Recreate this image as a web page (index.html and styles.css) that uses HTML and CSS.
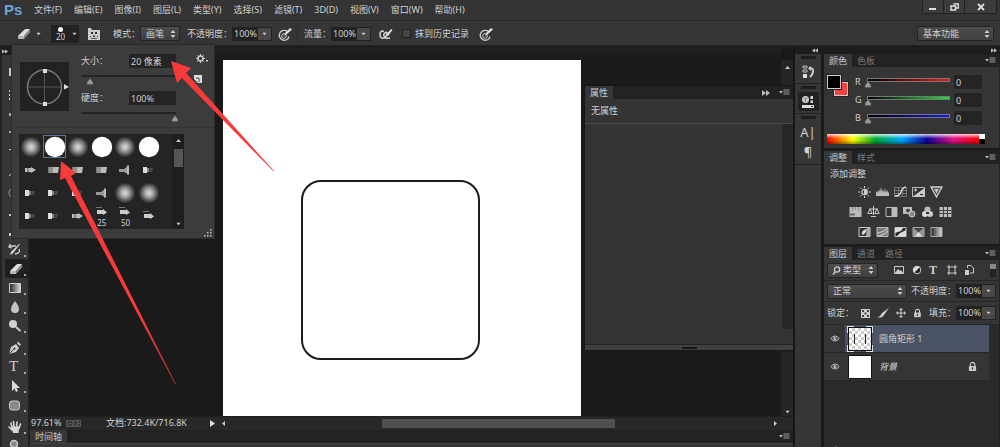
FILE: index.html
```html
<!DOCTYPE html>
<html lang="zh-CN">
<head>
<meta charset="utf-8">
<title>Ps</title>
<link rel="stylesheet" href="styles.css">
</head>
<body>
<svg class="defs" aria-hidden="true">
  <defs>
    <linearGradient id="fade"><stop offset="0" stop-color="#222"/><stop offset="1" stop-color="#ddd"/></linearGradient>
    <linearGradient id="arrowTail" gradientUnits="userSpaceOnUse" x1="90" y1="200" x2="176" y2="385"><stop offset="0.6" stop-color="#f83a3a"/><stop offset="1" stop-color="#a03030"/></linearGradient>
    <radialGradient id="softTip"><stop offset="0" stop-color="#ddd"/><stop offset=".35" stop-color="#aaa"/><stop offset="1" stop-color="#222"/></radialGradient>
    <symbol id="eraser" viewBox="0 0 16 16"><path d="M2 10 8 4q1-1 2-1h4l-6 7z" fill="#e0e0e0"/><path d="m14 3 .4 3-6 6.500-.4-2.500z" fill="#8a8a8a"/><path d="M2 10h6l.4 2.500q-.4.500-1 .5H3q-1 0-1-1z" fill="#b5b5b5"/></symbol>
    <symbol id="pressure" viewBox="0 0 16 16"><g fill="none" stroke="#ccc"><path d="M10.500 5.500a5 5 0 1 0 1.600 5" stroke-width="1.300"/><circle cx="7" cy="10" r="2.300"/></g><path d="m7 10 1.500-3.500L13 2l2 1.500L10 8z" fill="#ddd"/></symbol>
    <symbol id="updown" viewBox="0 0 6 8"><path d="m3 0 2.500 3h-5zM3 8l2.500-3h-5z" fill="#ccc"/></symbol>
    <symbol id="down" viewBox="0 0 6 4"><path d="M.5.5h5L3 3.500z" fill="#ccc"/></symbol>
    <symbol id="thumb" viewBox="0 0 8 7"><path d="m4 .5 3 4v2H1v-2z" fill="#999" stroke="#555" stroke-width=".5"/></symbol>
    <symbol id="panelMenu" viewBox="0 0 11 7"><path d="M0 2h4L2 4.500z" fill="#bbb"/><path d="M4.500 1h6M4.500 3h6M4.500 5h6" stroke="#999"/></symbol>
    <symbol id="ffwd" viewBox="0 0 8 6"><path d="m0 0 4 3-4 3zm4 0 4 3-4 3z" fill="#bbb"/></symbol>
    <symbol id="hardBrush" viewBox="0 0 22 22"><circle cx="11" cy="11" r="10.200" fill="#fff"/></symbol>
    <symbol id="softBrush" viewBox="0 0 22 22"><circle cx="11" cy="11" r="10.500" fill="url(#softTip)"/></symbol>
    <symbol id="tipA" viewBox="0 0 22 22"><path d="M5 9h6V8l5 3-5 3v-1H5z" fill="#bbb"/><path d="M8 9v4" stroke="#555"/></symbol>
    <symbol id="tipSmall" viewBox="0 0 22 14"><path d="M6 5h6V4l4 3.500-4 2.500V9H6z" fill="#ccc"/><path d="M5 2.500h6" stroke="#777"/></symbol>
    <symbol id="tipB" viewBox="0 0 22 22"><path d="M5 8h5v6H5z" fill="#777"/><path d="M7 8v6M9 8v6" stroke="#aaa"/><path d="M10 8h6l-1 6h-5z" fill="#bbb"/></symbol>
    <symbol id="tipC" viewBox="0 0 22 22"><path d="M5 8h4v6H5z" fill="#ddd"/><path d="M9 9h2v4H9z" fill="#888"/><path d="M11.500 9H15l-1 4h-2.500z" fill="#484848"/></symbol>
    <symbol id="tipFan" viewBox="0 0 22 22"><path d="M5 10h5l4-3v8l-4-2H5z" fill="#999"/><path d="M13 6.500h2v9h-2z" fill="#bbb"/></symbol>
    <symbol id="eye" viewBox="0 0 12 10"><path d="M1 5q5-6 10 0-5 6-10 0z" fill="none" stroke="#bbb" stroke-width="1.200"/><circle cx="6" cy="5" r="2" fill="#bbb"/><circle cx="6.800" cy="4.200" r=".7" fill="#222"/></symbol>
    <symbol id="lock" viewBox="0 0 10 12"><path d="M2.500 6V4a2.500 2.500 0 0 1 5 0v2" fill="none" stroke="#ccc" stroke-width="1.300"/><path d="M1 5.500h8v5.500H1z" fill="#ccc"/><path d="M4.300 7h1.400v2.500H4.300z" fill="#333"/></symbol>
  </defs>
</svg>
<div class="app">
  <header class="menubar">
    <span class="logo">Ps</span>
    <nav class="menu">
      <button>文件(F)</button><button>编辑(E)</button><button>图像(I)</button><button>图层(L)</button><button>类型(Y)</button><button>选择(S)</button><button>滤镜(T)</button><button>3D(D)</button><button>视图(V)</button><button>窗口(W)</button><button>帮助(H)</button>
    </nav>
    <div class="winbtns">
      <button aria-label="最小化"><svg width="8" height="8"><path d="M0 5h7v2H0z" fill="#ddd"/></svg></button>
      <button aria-label="还原"><svg width="9" height="8"><path d="M3.500 1h5v4h-3M1 3h4.500v4H1z" fill="none" stroke="#ddd" stroke-width="1.500"/></svg></button>
      <button class="close" aria-label="关闭"><svg width="8" height="8"><path d="m1 1 6 6M7 1 1 7" stroke="#ddd" stroke-width="1.800"/></svg></button>
    </div>
  </header>

  <div class="options">
    <button class="toolpick" aria-label="橡皮擦"><svg width="16" height="16"><use href="#eraser"/></svg><svg width="5" height="4"><use href="#down"/></svg></button>
    <button class="brushpick"><span class="dot"></span><span>20</span><svg class="brusharrow" width="5" height="4"><use href="#down"/></svg></button>
    <button class="plain brushpanel" aria-label="画笔面板"><svg width="14" height="14"><path d="M1 1h3l1 2h8v10H1z" fill="#ccc"/><path d="M4 5h2v2H4zM8 5h2v2H8zM6 8.500h2V10H6zM3 9h1v1H3zm7 0h1v1h-1zM4 11.200h6v.8H4z" fill="#333"/></svg></button>
    <label class="field">模式：<span class="select mode"><select><option>画笔</option></select><svg width="6" height="8"><use href="#updown"/></svg></span></label>
    <label class="field">不透明度：<span class="combo"><input value="100%"><button aria-label="不透明度"><svg width="5" height="4"><use href="#down"/></svg></button></span></label>
    <button class="plain" aria-label="压力"><svg width="16" height="16"><use href="#pressure"/></svg></button>
    <span class="rule"></span>
    <label class="field">流量：<span class="combo"><input value="100%"><button aria-label="流量"><svg width="5" height="4"><use href="#down"/></svg></button></span></label>
    <button class="plain airbrush" aria-label="喷枪"><svg width="15" height="14"><path d="M6 4.500Q2 3 2 7.500T6 11q3-1 3-6M9 5q-4 1-3 4t6 2" fill="none" stroke="#ccc" stroke-width="1.600"/><path d="m8 8 5-6 1.500 1L10 9z" fill="#ddd"/></svg></button>
    <label class="check"><input type="checkbox">抹到历史记录</label>
    <button class="plain" aria-label="大小压力"><svg width="16" height="16"><use href="#pressure"/></svg></button>
    <span class="select workspace"><select aria-label="工作区"><option>基本功能</option></select><svg width="6" height="8"><use href="#updown"/></svg></span>
  </div>

  <main class="work">
    <aside class="tools">
      <div class="toolhead"><svg width="6" height="5" viewBox="0 0 8 6"><use href="#ffwd"/></svg></div>
      <div class="toolgroup">
        <button aria-label="移动"><svg width="14" height="14"><path d="M1 2h2v8H1z" fill="#ccc"/></svg></button>
      </div>
      <div class="toolgroup">
        <button aria-label="选框"><svg width="14" height="14"><path d="M1.500 2v12" stroke="#ccc" stroke-dasharray="2"/></svg></button>
        <button aria-label="套索"><svg width="14" height="14"><path d="M1 6h2v3H1z" fill="#aaa"/></svg></button>
        <button aria-label="魔棒"><svg width="14" height="14"><path d="M1 5h2v2H1z" fill="#aaa"/></svg></button>
        <button aria-label="裁剪"><svg width="14" height="14"><path d="M1 4h3v1H1z" fill="#ccc"/></svg></button>
        <button aria-label="吸管"><svg width="14" height="14"><path d="m1 12 3-3" stroke="#ccc"/></svg></button>
      </div>
      <div class="toolgroup">
        <button aria-label="修复"><svg width="14" height="14"><circle cx="6" cy="7" r="5" fill="none" stroke="#999"/></svg></button>
        <button aria-label="画笔"><svg width="14" height="14"><path d="M1 9h3v2H1z" fill="#ccc"/></svg></button>
        <button aria-label="图章"><svg width="14" height="14"><path d="M1 9h3v3H1z" fill="#ccc"/></svg></button>
        <button aria-label="历史画笔"><svg width="14" height="14"><path d="M1 3h7M2 1l-1 3 3 1m7 1q2 4-4 5" fill="none" stroke="#ccc" stroke-width="1.300"/><path d="m12 1-6 8q-2 3-5 3 2-1 2-3l2-2 6-6z" fill="#ddd"/></svg></button>
        <button class="active" aria-label="橡皮擦"><svg width="16" height="16"><use href="#eraser"/></svg></button>
        <button aria-label="渐变"><svg width="14" height="14"><path d="M1.500 2.500h11v9h-11z" fill="url(#fade)" stroke="#ccc"/></svg></button>
        <button aria-label="模糊"><svg width="14" height="14"><path d="M7 1q4 5 4 8a4 4 0 0 1-8 0q0-3 4-8z" fill="#c4c4c4"/></svg></button>
        <button aria-label="减淡"><svg width="14" height="14"><circle cx="5" cy="5" r="4" fill="#d0d0d0"/><path d="m8 8 4.500 4" stroke="#ccc" stroke-width="2"/></svg></button>
      </div>
      <div class="toolgroup">
        <button aria-label="钢笔"><svg width="14" height="14"><path d="m1 13 2-7 5-3 3 4-3 4z" fill="#d0d0d0"/><path d="m9 2 1-1.500 3 3L11.500 5z" fill="#ccc"/><path d="m1 13 5-5" stroke="#333"/><circle cx="6.500" cy="7.500" r="1" fill="#333"/></svg></button>
        <button class="letter" aria-label="文字">T</button>
        <button aria-label="路径选择"><svg width="14" height="14"><path d="M4 1v11l2.500-2.500L8 13l2-1-1.500-3H12z" fill="#d8d8d8"/></svg></button>
        <button aria-label="圆角矩形"><svg width="14" height="14"><rect x="1.500" y="3" width="10" height="9" rx="2.500" fill="#888" stroke="#ccc"/></svg></button>
      </div>
      <div class="toolgroup">
        <button aria-label="抓手"><svg width="14" height="14"><path d="M4 8 3 3m3 4-.5-5.500M8.500 7 9 2M11 8l1.500-4M4 10 1 7" stroke="#d8d8d8" stroke-width="1.600" stroke-linecap="round"/><path d="M3.500 6.500h8L10.500 13H5z" fill="#d8d8d8"/></svg></button>
        <button aria-label="缩放"><svg width="14" height="14"><circle cx="6" cy="5" r="3.500" fill="#888" stroke="#ccc" stroke-width="1.500"/><path d="m8.500 8 4 4" stroke="#ccc" stroke-width="2"/></svg></button>
      </div>
    </aside>

    <section class="document">
      <div class="docrow">
        <div class="stage"><div class="page"><div class="shape"></div></div></div>
        <div class="vscroll"><svg width="5" height="4"><path d="m2.500 0 2.500 3H0z" fill="#ccc"/></svg><svg width="5" height="4"><use href="#down"/></svg></div>
      </div>
      <div class="status">
        <span class="zoomval">97.61%</span>
        <svg width="15" height="9"><path d="M0 1h15v7H0z" fill="#555"/><circle cx="4" cy="4.500" r="2" fill="none" stroke="#222"/><path d="M8 3h2v3H8m4-3h2m-2 3h2" stroke="#222" fill="none"/></svg>
        <span class="docsize">文档:732.4K/716.8K</span>
        <svg width="5" height="7"><path d="m0 0 5 3.500L0 7z" fill="#ddd"/></svg>
        <div class="hscroll"><svg width="3" height="5"><path d="M3 0v5L0 2.500z" fill="#ccc"/></svg><span class="hthumb"></span><svg width="3" height="5"><path d="M0 0v5l3-2.500z" fill="#ccc"/></svg></div>
      </div>
      <div class="tabs timeline"><button class="tab on">时间轴</button><svg class="pmenu" width="11" height="7"><use href="#panelMenu"/></svg></div>
      <div class="timebody"></div>

      <section class="props">
        <div class="tabs"><button class="tab on">属性</button><svg class="pmenu" width="8" height="6"><use href="#ffwd"/></svg><svg width="11" height="7"><use href="#panelMenu"/></svg></div>
        <h2>无属性</h2>
        <div class="propbody"><span></span></div>
        <div class="grip"></div>
      </section>
    </section>

    <aside class="strip">
      <div class="striphead"><svg class="flip" width="6" height="5" viewBox="0 0 8 6"><use href="#ffwd"/></svg></div>
      <div class="stripgroup"><button aria-label="历史记录"><svg width="14" height="14"><path d="M2 1h4v2H2zm0 4h4v2H2z" fill="none" stroke="#bbb"/><path d="M2 9h4v4H2z" fill="#ddd"/><path d="M8 3q5 0 4 4-.5 3-3 5" fill="none" stroke="#ccc" stroke-width="2"/><path d="M7 3.500 10 1v5z" fill="#ccc"/></svg></button></div>
      <div class="stripgroup"><button class="active" aria-label="属性"><svg width="14" height="14"><circle cx="4.500" cy="4.500" r="3.500" fill="#ccc"/><path d="m2.500 3 2 1 2-1m-2 1v3" stroke="#777" fill="none"/><path d="M9.500 1H12v3H9.500zm0 4.500H12V8H9.500zM1 10h12v3H1z" fill="#ddd"/><path d="M10 11h2v1h-2z" fill="#333"/></svg></button></div>
      <div class="stripgroup tall"><button class="glyph" aria-label="字符">A|</button><button class="glyph" aria-label="段落">¶</button></div>
    </aside>

    <aside class="panels">
      <div class="striphead"><svg width="6" height="5" viewBox="0 0 8 6"><use href="#ffwd"/></svg></div>
      <section class="panel">
        <div class="tabs"><button class="tab on">颜色</button><button class="tab">色板</button><svg class="pmenu" width="11" height="7"><use href="#panelMenu"/></svg></div>
        <div class="color">
          <div class="swatches"><span class="bg"></span><span class="fg"></span></div>
          <div class="channels">
            <label class="channel"><span>R</span><span class="track red"><svg width="8" height="7"><use href="#thumb"/></svg></span><input value="0"></label>
            <label class="channel"><span>G</span><span class="track green"><svg width="8" height="7"><use href="#thumb"/></svg></span><input value="0"></label>
            <label class="channel"><span>B</span><span class="track blue"><svg width="8" height="7"><use href="#thumb"/></svg></span><input value="0"></label>
          </div>
        </div>
        <div class="spectrum"><span class="hues"></span><span class="bw"></span></div>
      </section>
      <section class="panel">
        <div class="tabs"><button class="tab on">调整</button><button class="tab">样式</button><svg class="pmenu" width="11" height="7"><use href="#panelMenu"/></svg></div>
        <div class="adjust">
          <h2>添加调整</h2>
          <div class="adjrow">
            <svg width="13" height="12"><circle cx="6.500" cy="6" r="2.700" fill="none" stroke="#ccc" stroke-width="1.200"/><path d="M6.500 3.300v5.400a2.700 2.700 0 0 0 0-5.400zM6.500 0v2m0 8v2M0 6h2m9 0h2M2 1.500 3.500 3m6 6L11 10.500M2 10.500 3.500 9m6-6L11 1.500" fill="#ccc" stroke="#ccc"/></svg>
            <svg width="13" height="12"><path d="M0 10V6l1-1 1 2 1-4 1 3 1-5 1 5 1-3 1 4 1-5 1 5 1-3 1 2 1 1v3z" fill="#bbb"/></svg>
            <svg width="13" height="12"><path d="M.5 1.500h12v9H.5zM4.500 1v10m4-10v10M0 4.500h13m-13 3h13" fill="none" stroke="#777"/><path d="M1 10q5 0 6-4t5-5" fill="none" stroke="#ddd" stroke-width="1.300"/></svg>
            <svg width="13" height="12"><path d="M.5 1.500h12v9H.5z" fill="#333" stroke="#bbb"/><path d="M1 10.500 12.500 2v8.500z" fill="#ccc"/><path d="M2 4h3M3.500 2.500v3" stroke="#ccc"/><path d="M8 8.500h3" stroke="#222"/></svg>
            <svg width="13" height="12"><path d="M1 1h11l-5.500 10z" fill="#555" stroke="#ccc" stroke-width="1.300"/><path d="M4.500 3h4L6.500 7.500z" fill="#ccc"/></svg>
          </div>
          <div class="adjrow">
            <svg width="13" height="12"><path d="M.5 1h12v10H.5z" fill="#bbb"/><path d="M3.500 1v4m3-4v3m3-3v4" stroke="#888"/><path d="M1 7h11v3H1z" fill="url(#fadeBand)"/><path d="M1 7.500h5v2H1z" fill="#666"/></svg>
            <svg width="13" height="12"><path d="M6.500 0v9M2 3h9M4 10.500h5M3 3 .8 7.500h4.400zm7 0L7.800 7.500h4.400z" fill="none" stroke="#ccc"/></svg>
            <svg width="13" height="12"><path d="M1 1.500h11v9H1z" fill="#333" stroke="#bbb"/><path d="M6.500 1.500H12v9H6.500z" fill="#bbb"/></svg>
            <svg width="13" height="12"><path d="M0 1h9v7H0z" fill="#bbb"/><circle cx="5" cy="4.500" r="2.500" fill="#444" stroke="#ccc"/><circle cx="9" cy="8" r="3" fill="#888" stroke="#ccc"/></svg>
            <svg width="13" height="12"><circle cx="6.500" cy="3.500" r="3" fill="#bbb"/><circle cx="4" cy="8" r="3" fill="#ddd"/><circle cx="9" cy="8" r="3" fill="#ccc"/><path d="M5 6h3v2H5z" fill="#333"/></svg>
            <svg width="13" height="12"><path d="M.5 1h12v10H.5z" fill="#bbb"/><path d="M4.500 1v10m4-10v10M0 4.500h13m-13 3h13" stroke="#444"/></svg>
          </div>
          <div class="adjrow">
            <svg width="13" height="12"><path d="M1 1.500h11v9H1z" fill="#333" stroke="#ccc"/><path d="M4 9q-1-5 5-6-1 5-5 6z" fill="#ddd"/><path d="M9 1.500h3v9H8z" fill="#aaa"/></svg>
            <svg width="13" height="12"><path d="M1 1.500h11v9H1z" fill="#777" stroke="#bbb"/><path d="M1 7q5 0 11-5M1 10q6 0 11-5" fill="none" stroke="#bbb" stroke-width="1.500"/></svg>
            <svg width="13" height="12"><path d="M1 1.500h11v9H1z" fill="#222" stroke="#ccc"/><path d="M1 2h8L7 5 1 7zm11 2v6H3l3-3z" fill="#ddd"/></svg>
            <svg width="13" height="12"><path d="M1 1.500h11v9H1z" fill="#444" stroke="#aaa"/><path d="m1 1.500 5.500 5-5.500 4zm11 0-5.500 5 5.500 4z" fill="#999"/><path d="m2 10.500 4.500-4.500 4.500 4.500z" fill="#ddd"/></svg>
            <svg width="13" height="12"><path d="M1 1.500h11v9H1z" fill="url(#fade)" stroke="#aaa"/></svg>
          </div>
        </div>
      </section>
      <section class="panel layers">
        <div class="tabs"><button class="tab on">图层</button><button class="tab">通道</button><button class="tab">路径</button><svg class="pmenu" width="11" height="7"><use href="#panelMenu"/></svg></div>
        <div class="lrow filter">
          <span class="select kind"><svg class="mag" width="9" height="9"><circle cx="5" cy="3.500" r="2.600" fill="none" stroke="#ccc" stroke-width="1.300"/><path d="m3.500 5.500-2.500 3" stroke="#ccc" stroke-width="1.400"/></svg><select aria-label="筛选"><option>类型</option></select><svg width="6" height="8"><use href="#updown"/></svg></span>
          <span class="filters">
            <svg width="10" height="10"><path d="M.5 1.500h9v7h-9z" fill="none" stroke="#ccc"/><path d="m1 8 3-4 2 2 1-1 2 3z" fill="#ccc"/></svg>
            <svg width="10" height="10"><circle cx="5" cy="5" r="3.800" fill="#222" stroke="#ccc"/><path d="M2.200 7.800 7.800 2.200A4 4 0 0 0 2.200 7.800z" fill="#ddd"/></svg>
            <span class="tglyph">T</span>
            <svg width="10" height="10"><path d="M2 0v10M8 0v10M0 2h10M0 8h10" stroke="#ccc"/></svg>
            <svg width="10" height="10"><path d="M3.500 3V.5H7L9.500 3v5H6" fill="none" stroke="#ccc"/><path d="M1 5h4v5H1z" fill="#ccc"/></svg>
          </span>
          <button class="toggle" aria-label="筛选开关"></button>
        </div>
        <div class="lrow">
          <span class="select blend"><select aria-label="混合模式"><option>正常</option></select><svg width="6" height="8"><use href="#updown"/></svg></span>
          <label class="field end">不透明度：<span class="combo"><input value="100%"><button aria-label="不透明度"><svg width="5" height="4"><use href="#down"/></svg></button></span></label>
        </div>
        <div class="lrow locks">
          <span>锁定：</span>
          <svg width="9" height="9"><path d="M0 0h9v9H0z" fill="#ccc"/><path d="M1 1h2v2H1zm5 0h2v2H6zM3.500 3.500h2v2h-2zM1 6h2v2H1zm5 0h2v2H6z" fill="#444"/></svg>
          <svg width="12" height="10"><path d="M12 0 7 7 5 5zM5 5l2 2q-1 3-7 2.500 3-.500 5-4.500z" fill="#ccc"/></svg>
          <svg width="10" height="10"><path d="M5 1v8M1 5h8" stroke="#ccc"/><path d="m5 0 2 2H3zm0 10 2-2H3zM0 5l2-2v4zm10 0L8 3v4z" fill="#ccc"/></svg>
          <svg width="9" height="10"><use href="#lock"/></svg>
          <label class="field end">填充：<span class="combo"><input value="100%"><button aria-label="填充"><svg width="5" height="4"><use href="#down"/></svg></button></span></label>
        </div>
        <div class="layerlist">
          <div class="layer selected"><svg width="10" height="9"><use href="#eye"/></svg><span class="frame"><span class="thumbnail checker"><i></i><i></i></span></span><span>圆角矩形 1</span></div>
          <div class="layer"><svg width="10" height="9"><use href="#eye"/></svg><span class="frame off"><span class="thumbnail"></span></span><em>背景</em><svg class="locked" width="9" height="11"><use href="#lock"/></svg></div>
        </div>
        <div class="layerfoot"><svg width="10" height="9"><use href="#eye"/></svg></div>
      </section>
    </aside>
  </main>

  <section class="brushes">
    <div class="brushtop">
      <svg class="angle" width="49" height="49"><path d="M24.500 8v33M8 25h33" stroke="#555"/><circle cx="24.500" cy="25" r="17" fill="none" stroke="#777" stroke-width="1.500"/><path d="M23 7h4v4h-4zm0 33h4v4h-4zm21-18 5 3-5 2.500z" fill="#ddd"/></svg>
      <div class="sizes">
        <label class="sizerow"><span>大小：</span><input value="20 像素"></label>
        <div class="slide"><svg class="low" width="8" height="7"><use href="#thumb"/></svg></div>
        <label class="sizerow"><span>硬度：</span><input value="100%"></label>
        <div class="slide"><svg class="high" width="8" height="7"><use href="#thumb"/></svg></div>
      </div>
      <div class="brushside">
        <button class="plain" aria-label="设置"><svg width="12" height="9"><circle cx="4.500" cy="4.500" r="2.500" fill="none" stroke="#ccc" stroke-width="1.500"/><path d="M4.500 0v2m0 5v2M0 4.500h2m5 0h2M1.300 1.300l1.500 1.500m3.400 3.400 1.500 1.500m-6.400 0 1.500-1.500m3.400-3.400 1.500-1.500" stroke="#ccc"/><path d="M10 6h2v1.500h-2z" fill="#ccc"/></svg></button>
        <button class="plain newpreset" aria-label="新建"><svg width="8" height="8"><path d="M0 0h8v8H4L0 4z" fill="#ddd"/><path d="M2 3h3v4" fill="none" stroke="#444"/></svg></button>
      </div>
    </div>
    <div class="brushlist">
      <div class="brushgrid">
        <span><svg><use href="#softBrush"/></svg></span><span class="chosen"><svg><use href="#hardBrush"/></svg></span><span><svg><use href="#softBrush"/></svg></span><span><svg><use href="#hardBrush"/></svg></span><span><svg><use href="#softBrush"/></svg></span><span><svg><use href="#hardBrush"/></svg></span>
        <span><svg><use href="#tipA"/></svg></span><span><svg><use href="#tipB"/></svg></span><span><svg><use href="#tipB"/></svg></span><span><svg><use href="#tipB"/></svg></span><span><svg><use href="#tipFan"/></svg></span><span><svg><use href="#tipC"/></svg></span>
        <span><svg><use href="#tipC"/></svg></span><span><svg><use href="#tipC"/></svg></span><span><svg><use href="#tipC"/></svg></span><span><svg><use href="#tipFan"/></svg></span><span><svg><use href="#softBrush"/></svg></span><span><svg><use href="#softBrush"/></svg></span>
        <span><svg><use href="#tipC"/></svg></span><span><svg><use href="#tipC"/></svg></span><span><svg><use href="#tipA"/></svg></span><span class="num"><svg><use href="#tipSmall"/></svg>25</span><span class="num"><svg><use href="#tipSmall"/></svg>50</span><span class="num"><svg><use href="#tipSmall"/></svg></span>
      </div>
      <div class="brushscroll"><svg width="5" height="4"><path d="m2.500 0 2.500 3H0z" fill="#ccc"/></svg><span></span><svg width="5" height="4"><use href="#down"/></svg></div>
    </div>
    <svg class="resize" width="8" height="8"><path d="M6 0h1.500v1.500H6zM3 3h1.500v1.500H3zm3 0h1.500v1.500H6zM0 6h1.500v1.500H0zm3 0h1.500v1.500H3zm3 0h1.500v1.500H6z" fill="#bbb"/></svg>
  </section>

  <svg class="arrows" width="280" height="390" aria-hidden="true">
    <path d="m171 61 20 7-5 5 88 98h-1l-91-93-5 5z" fill="#f83a3a"/>
    <path d="m61 161 15 12-5 3 105 208h-1L65 178l-5 2z" fill="url(#arrowTail)"/>
  </svg>
</div>
</body>
</html>
```
FILE: styles.css
```css
* { box-sizing: border-box; }
body {
  margin: 0;
  background: #191919;
  color: #d0d0d0;
  font: 9px/12px "Noto Sans", "Noto Sans CJK SC", sans-serif;
}
button, input, select { font: inherit; color: inherit; border: 0; padding: 0; margin: 0; background: none; border-radius: 0; }
svg { display: block; flex: none; }
h2 { margin: 0; font-size: 9px; font-weight: 400; }
.defs { position: absolute; width: 0; height: 0; }
.app { position: relative; display: flex; flex-direction: column; height: 100vh; overflow: hidden; }

.menubar { display: flex; align-items: flex-start; height: 21px; padding-left: 4px; background: #343434; border-bottom: 1px solid #222; flex: none; }
.logo { width: 25px; font: 700 15px/20px "Liberation Sans", sans-serif; color: #6ea3d8; }
.menu { display: flex; gap: 12px; padding: 4px 5px; white-space: nowrap; }
.winbtns { display: flex; margin: 0 3px 0 auto; border: 1px solid #222; border-top: 0; background: #3c3c3c; }
.winbtns button { display: grid; place-items: center; width: 21px; height: 13px; border-right: 1px solid #222; }
.winbtns .close { width: 31px; border: 0; }

.options { display: flex; align-items: center; height: 25px; padding: 0 6px 0 16px; background: #353535; border-top: 1px solid #3e3e3e; border-bottom: 1px solid #232323; flex: none; white-space: nowrap; }
.toolpick { display: flex; align-items: center; gap: 4px; margin-right: 10px; }
.brushpick { position: relative; display: flex; flex-direction: column; align-items: center; width: 28px; height: 18px; padding: 2px 9px 0 0; background: #222; font-size: 8px; line-height: 10px; }
.dot { width: 5px; height: 5px; border-radius: 50%; background: #fff; flex: none; }
.brusharrow { position: absolute; right: 2px; top: 7px; }
.plain { display: grid; place-items: center; }
.brushpanel { margin: 0 12px 0 8px; }
.field { display: flex; align-items: center; }
.select { position: relative; display: flex; align-items: center; height: 15px; background: linear-gradient(#4c4c4c, #404040); border: 1px solid #242424; border-radius: 2px; }
.select select { appearance: none; flex: 1; min-width: 0; height: 13px; padding-left: 5px; outline: 0; }
.select > svg { margin-right: 3px; }
.mode { width: 40px; margin-right: 7px; }
.combo { display: flex; height: 14px; border: 1px solid #222; }
.combo input { width: 25px; height: 12px; padding-left: 1px; background: #222; }
.combo button { display: grid; place-items: center; width: 13px; background: #484848; }
.options .combo { margin-right: 5px; }
.rule { width: 1px; height: 18px; margin: 0 6px 0 4px; background: #2a2a2a; }
.airbrush { margin: 0 9px 0 2px; }
.check { display: flex; align-items: center; gap: 4px; margin-right: 9px; }
.check input { appearance: none; width: 9px; height: 9px; background: #444; border: 1px solid #222; }
.workspace { width: 77px; margin-left: auto; }

.work { display: flex; flex: 1; min-height: 0; background: #1f1f1f; }
.tools { display: flex; flex-direction: column; gap: 3px; width: 28px; padding-left: 3px; background: #363636; border-left: 2px solid #222; overflow: hidden; flex: none; }
.toolhead { height: 14px; padding: 3px 0; margin-left: -3px; background: linear-gradient(#1c1c1c 9px, #363636 9px); flex: none; }
.toolgroup { display: flex; flex-direction: column; flex: none; }
.toolgroup button { position: relative; display: flex; align-items: center; width: 23px; height: 19px; padding-left: 3px; flex: none; }
.toolgroup button::after { content: ""; position: absolute; right: 2px; bottom: 2px; width: 2px; height: 2px; background: #aaa; }
.toolgroup .active { background: #1f1f1f; border-radius: 2px; }
.toolgroup .letter { padding-left: 4px; font: 15px/19px "Liberation Serif", serif; }

.document { position: relative; display: flex; flex-direction: column; flex: 1; min-width: 0; background: #191919; border-left: 2px solid #202020; }
.docrow { display: flex; flex: 1; min-height: 0; border-top: 2px solid #1c1c1c; }
.stage { flex: 1; padding: 12px 0 0 193px; background: linear-gradient(#222, #1a1a1a 12px); }
.page { width: 358px; height: 100%; padding: 120px 0 0 78px; background: #fff; }
.shape { width: 179px; height: 180px; border: 2px solid #1c1c1c; border-radius: 20px; }
.vscroll { display: flex; flex-direction: column; align-items: center; justify-content: space-between; width: 12px; padding: 6px 0 2px; margin-top: 12px; background: #252525; }
.status { display: flex; align-items: center; height: 14px; padding-bottom: 1px; background: #282828; border-top: 1px solid #202020; flex: none; }
.zoomval { width: 36px; padding-left: 1px; }
.docsize { width: 129px; padding-left: 25px; white-space: nowrap; }
.hscroll { display: flex; align-items: center; flex: 1; height: 12px; margin: 0 16px 0 5px; padding-left: 2px; }
.hthumb { width: 42%; height: 9px; margin: 0 auto 0 157px; background: #505050; border-radius: 1px; }
.tabs { display: flex; align-items: center; height: 13px; padding-right: 3px; background: #222; color: #888; flex: none; }
.tab { height: 13px; padding: 0 5px; color: #777; white-space: nowrap; }
.tab.on { background: #363636; color: #c8c8c8; }
.pmenu { margin-left: auto; }
.timebody { height: 4px; background: #363636; border-top: 1px solid #444; flex: none; }

.props { position: absolute; left: 554px; right: 0; top: 39px; height: 266px; display: flex; flex-direction: column; background: #343434; border: 1px solid #151515; border-right: 0; }
.props .tabs { gap: 9px; }
.props h2 { height: 25px; padding: 6px 6px; border-bottom: 1px solid #4a4a4a; }
.propbody { display: flex; justify-content: flex-end; flex: 1; padding-bottom: 15px; margin-left: 4px; border-left: 1px solid #303030; }
.propbody span { width: 11px; background: #272727; }
.grip { height: 6px; border-top: 1px solid #222; background: linear-gradient(#161616, #161616) center / 15px 2px no-repeat #404040; }

.strip { display: flex; flex-direction: column; width: 31px; background: #363636; border-left: 2px solid #161616; border-right: 3px solid #1b1b1b; flex: none; }
.striphead { display: flex; justify-content: flex-end; align-items: center; height: 8px; padding-right: 3px; background: #1c1c1c; flex: none; }
.flip { transform: scaleX(-1); }
.stripgroup { display: flex; flex-direction: column; align-items: center; gap: 2px; height: 30px; border-bottom: 1px solid #222; background: linear-gradient(#1d1d1d, #1d1d1d) center 2px / 15px 3px no-repeat; padding-top: 8px; }
.stripgroup.tall { height: 51px; padding-top: 9px; gap: 1px; }
.stripgroup button { display: grid; place-items: center; width: 21px; height: 19px; border-radius: 2px; }
.stripgroup .active { background: #222; }
.stripgroup .glyph { font-size: 13px; line-height: 19px; }

.panels { display: flex; flex-direction: column; gap: 3px; width: 176px; background: #1c1c1c; flex: none; }
.panels .striphead { margin-bottom: -3px; }
.panel { background: #353535; border-right: 1px solid #222; }
.color { display: flex; gap: 5px; padding: 8px 17px 0 3px; }
.swatches { display: grid; grid-template: repeat(3, 7px) / repeat(3, 7px); }
.swatches span { border: 1px solid #ccc; outline: 1px solid #222; }
.swatches .fg { grid-area: 1 / 1 / 3 / 3; background: #000; z-index: 1; }
.swatches .bg { grid-area: 2 / 2 / 4 / 4; background: #ff4040; }
.channels { flex: 1; display: flex; flex-direction: column; gap: 4px; }
.channel { display: flex; align-items: center; height: 14px; }
.channel > span:first-child { width: 14px; padding-left: 2px; }
.channel .track { flex: 1; height: 4px; margin: 0 4px 5px 0; border: 1px solid #777; }
.track svg { margin: 2px 0 0 -4px; }
.red { background: linear-gradient(90deg, #000, #f01818); }
.green { background: linear-gradient(90deg, #000, #18e838); }
.blue { background: linear-gradient(90deg, #000, #1818f0); }
.channel input { width: 28px; height: 14px; padding-left: 2px; background: #242424; }
.spectrum { display: flex; height: 10px; margin: 9px 14px 4px 3px; }
.hues { flex: 1; background: linear-gradient(#ffffffd0, #fff0 45%, #0000 60%, #0006), linear-gradient(90deg, #f00, #ff0 17%, #0a3 32%, #0af 49%, #109 66%, #e0148c 83%, #f00); }
.bw { width: 6px; background: linear-gradient(#fff 50%, #000 50%); }
.adjust { padding: 4px 0 6px; }
.adjust h2 { padding-left: 6px; margin-bottom: 6px; }
.adjrow { display: flex; justify-content: center; gap: 5px; height: 20px; padding-right: 22px; }
.adjrow:last-child { height: 12px; }

.layers { display: flex; flex-direction: column; flex: 1; min-height: 0; background: #2b2b2b; }
.lrow { display: flex; align-items: center; height: 21px; padding: 0 3px; background: #353535; border-bottom: 1px solid #262626; flex: none; white-space: nowrap; }
.kind { width: 51px; }
.kind select { padding-left: 2px; }
.select .mag { margin: 0 0 0 4px; }
.filters { display: flex; align-items: center; justify-content: space-between; width: 80px; margin-left: 16px; }
.tglyph { width: 10px; font: 700 12px/12px "Liberation Serif", serif; }
.toggle { width: 6px; height: 13px; margin-left: auto; background: linear-gradient(#888 5px, #222 5px); }
.blend { width: 80px; }
.end { margin-left: auto; }
.lrow.locks { gap: 7px; height: 23px; }
.layerlist { width: 165px; }
.layer { display: flex; align-items: center; height: 28px; padding-left: 6px; background: #353535; border-bottom: 1px solid #262626; }
.layer.selected { background: linear-gradient(90deg, #353535 21px, #4a5466 21px); }
.frame { display: grid; place-items: center; width: 26px; height: 26px; margin: 0 6px 0 7px; background: linear-gradient(#4a5466, #4a5466) center / 12px 100% no-repeat, linear-gradient(#4a5466, #4a5466) center / 100% 12px no-repeat #ddd; }
.frame.off { background: none; }
.thumbnail { display: flex; justify-content: center; align-items: center; gap: 10px; width: 24px; height: 24px; border: 1px solid #111; background: #fff; }
.checker { background: repeating-conic-gradient(#ccc 0 25%, #fff 0 50%) 0 0 / 6px 6px; }
.checker i { width: 1px; height: 10px; background: #222; }
.locked { margin: 0 12px 0 auto; }
.layerfoot { margin-top: auto; height: 2px; padding-left: 7px; overflow: hidden; }

.brushes { position: absolute; left: 11px; top: 44px; width: 204px; height: 195px; display: flex; flex-direction: column; background: #3c3c3c; border: 1px solid #2a2a2a; }
.brushtop { display: flex; height: 83px; padding-left: 8px; border-bottom: 1px solid #333; }
.angle { margin-top: 17px; background: #222; }
.sizes { width: 95px; margin: 9px 0 0 12px; }
.sizerow { display: flex; align-items: center; justify-content: space-between; height: 14px; }
.sizerow input { width: 47px; height: 14px; padding-left: 2px; background: #242424; }
.slide { height: 11px; margin: 7px 0 5px; border-top: 2px solid #242424; }
.slide .low { margin: 1px 0 0 5px; }
.slide .high { margin: 1px 0 0 90px; }
.brushside { display: flex; flex-direction: column; align-items: center; gap: 12px; padding: 9px 0 0 18px; }
.newpreset { margin-right: 8px; }
.brushlist { display: flex; gap: 11px; width: 165px; height: 95px; margin: 6px 0 0 7px; background: #242424; }
.brushgrid { display: grid; grid-template-columns: repeat(6, 1fr); grid-auto-rows: 23px; flex: 1; padding-top: 1px; }
.brushgrid span { display: flex; flex-direction: column; align-items: center; justify-content: center; min-width: 0; }
.brushgrid svg { width: 22px; height: 22px; }
.brushgrid .chosen { border: 1px solid #5577a0; }
.brushgrid .num { font-size: 8px; line-height: 8px; }
.brushgrid .num svg { height: 14px; }
.brushscroll { display: flex; flex-direction: column; align-items: center; width: 12px; padding: 5px 0 3px; background: #1e1e1e; }
.brushscroll span { width: 9px; height: 18px; margin: 6px 0 auto; background: #555; }
.resize { margin: auto 2px 1px auto; }
.arrows { position: absolute; left: 0; top: 0; pointer-events: none; }
```
